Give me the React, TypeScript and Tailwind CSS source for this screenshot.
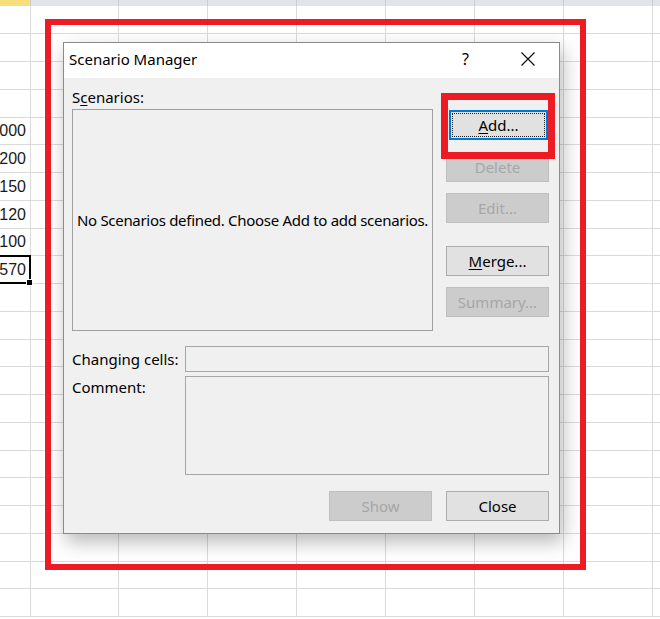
import React from 'react';

const COLS = [31, 88, 89, 89, 89, 89, 89, 89, 100];
const ROW_COUNT = 22;
const VALUES: Record<number, string> = { 4: '000', 5: '200', 6: '150', 7: '120', 8: '100', 9: '570' };

function Sheet() {
  return (
    <div className="flex flex-col font-['Liberation_Sans',sans-serif] text-[16px] text-[#1a1a1a]">
      {/* column header strip, mostly scrolled off */}
      <div className="flex h-[6px]">
        {COLS.map((w, c) => (
          <div
            key={c}
            style={{ width: w }}
            className={`shrink-0 border-r border-[#c9ccd1] ${c === 0 ? 'bg-[#f7df7c]' : 'bg-[#e1e4e8]'}`}
          />
        ))}
      </div>
      {Array.from({ length: ROW_COUNT }).map((_, r) => (
        <div key={r} className={`flex ${r > 0 && r % 4 === 0 ? 'h-[27px]' : 'h-[28px]'}`}>
          {COLS.map((w, c) => (
            <div
              key={c}
              style={{ width: w }}
              className="flex shrink-0 items-center justify-end overflow-hidden border-r border-b border-[#dadada] pr-[4px]"
            >
              {c === 0 && VALUES[r] ? <span className="whitespace-nowrap">{VALUES[r]}</span> : null}
            </div>
          ))}
        </div>
      ))}
    </div>
  );
}

function Btn({ children, disabled, focused }: { children: React.ReactNode; disabled?: boolean; focused?: boolean }) {
  if (focused) {
    return (
      <div className="ml-[3px] flex h-[30px] w-[99px] border-2 border-[#0078d7] bg-[#e1e1e1]">
        <div className="m-[1px] flex flex-1 items-center justify-center border border-dotted border-[#222]">
          {children}
        </div>
      </div>
    );
  }
  return (
    <div
      className={`flex h-[30px] w-[103px] items-center justify-center border ${
        disabled ? 'border-[#bfbfbf] bg-[#cccccc] text-[#a6a6a6]' : 'border-[#adadad] bg-[#e1e1e1] text-black'
      }`}
    >
      {children}
    </div>
  );
}

function Dialog() {
  return (
    <div className="absolute left-[63px] top-[42px] flex h-[492px] w-[497px] flex-col border border-[#8a8a8a] bg-[#f0f0f0] font-['Noto_Sans','Open_Sans',sans-serif] text-[15px] leading-[18px] text-black shadow-[3px_8px_18px_rgba(0,0,0,0.28)]">
      {/* title bar */}
      <div className="flex h-[35px] items-center bg-white pb-[3px] pl-[5px]">
        <span>Scenario Manager</span>
        <span className="ml-auto text-[16px]">?</span>
        <svg className="ml-[52px] mr-[24px]" width="14" height="14" viewBox="0 0 14 14" aria-hidden="true">
          <path d="M0.5 0.5L13.5 13.5M13.5 0.5L0.5 13.5" stroke="#111" strokeWidth="1.2" />
        </svg>
      </div>

      <div className="flex flex-1 flex-col px-[8px] pt-[10px]">
        <div className="flex">
          <div className="flex w-[361px] flex-col">
            <div className="h-[18px]">
              S<span className="underline underline-offset-2">c</span>enarios:
            </div>
            <div className="mt-[3px] flex h-[222px] items-center justify-center border border-[#a0a0a0] bg-[#f0f0f0]">
              <span className="whitespace-nowrap tracking-[-0.3px]">
                No Scenarios defined. Choose Add to add scenarios.
              </span>
            </div>
          </div>

          <div className="ml-[13px] flex flex-col pt-[22px]">
            <Btn focused>
              <span className="underline underline-offset-2">A</span>dd...
            </Btn>
            <div className="mt-[12px]">
              <Btn disabled>Delete</Btn>
            </div>
            <div className="mt-[11px]">
              <Btn disabled>Edit...</Btn>
            </div>
            <div className="mt-[23px]">
              <Btn>
                <span className="underline underline-offset-2">M</span>erge...
              </Btn>
            </div>
            <div className="mt-[11px]">
              <Btn disabled>Summary...</Btn>
            </div>
          </div>
        </div>

        <div className="mt-[15px] flex items-center">
          <div className="w-[113px]">Changing cells:</div>
          <div className="h-[26px] w-[364px] border border-[#a6a6a6] bg-[#f0f0f0]" />
        </div>
        <div className="mt-[4px] flex items-start">
          <div className="w-[113px] pt-[2px]">Comment:</div>
          <div className="h-[99px] w-[364px] border border-[#a6a6a6] bg-[#f0f0f0]" />
        </div>

        <div className="mt-[16px] flex justify-end gap-[14px] pr-[2px]">
          <Btn disabled>Show</Btn>
          <Btn>Close</Btn>
        </div>
      </div>
    </div>
  );
}

export default function App() {
  return (
    <div className="relative h-[619px] w-[660px] overflow-hidden bg-white">
      <Sheet />

      {/* active cell */}
      <div className="absolute left-[-4px] top-[255px] h-[29px] w-[35px] border-2 border-black" />
      <div className="absolute left-[26px] top-[279px] h-[7px] w-[7px] border border-white bg-black" />

      <Dialog />

      {/* annotation boxes */}
      <div className="absolute left-[45px] top-[19px] h-[551px] w-[541px] border-[6px] border-[#ed1c24]" />
      <div className="absolute left-[441px] top-[93px] h-[66px] w-[114px] border-[7px] border-[#ed1c24]" />
    </div>
  );
}
